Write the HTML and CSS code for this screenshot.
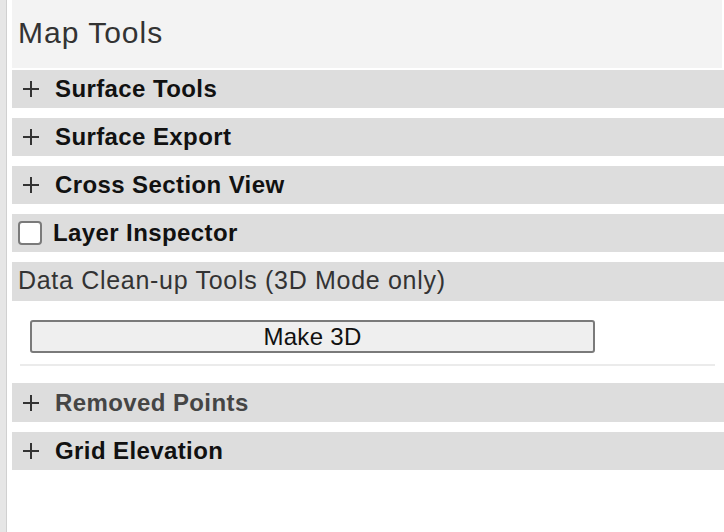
FILE: index.html
```html
<!DOCTYPE html>
<html>
<head>
    <title>Map Tools</title>
    <link rel="stylesheet" href="styles.css">
</head>
<body>
    <div class="splitter"></div>
    <div class="panel">
        <div class="panel-title">Map Tools</div>

        <div class="section">
            <svg class="plus" width="18" height="18" viewBox="0 0 18 18"><path d="M9 1v16M1 9h16" stroke="#333" stroke-width="2"/></svg>
            <span>Surface Tools</span>
        </div>
        <div class="section">
            <svg class="plus" width="18" height="18" viewBox="0 0 18 18"><path d="M9 1v16M1 9h16" stroke="#333" stroke-width="2"/></svg>
            <span>Surface Export</span>
        </div>
        <div class="section">
            <svg class="plus" width="18" height="18" viewBox="0 0 18 18"><path d="M9 1v16M1 9h16" stroke="#333" stroke-width="2"/></svg>
            <span>Cross Section View</span>
        </div>
        <label class="section">
            <input type="checkbox" class="check">
            <span>Layer Inspector</span>
        </label>

        <div class="group-title">Data Clean-up Tools (3D Mode only)</div>
        <div class="group-body">
            <button class="make-btn">Make 3D</button>
            <hr class="divider">
        </div>

        <div class="section muted">
            <svg class="plus" width="18" height="18" viewBox="0 0 18 18"><path d="M9 1v16M1 9h16" stroke="#333" stroke-width="2"/></svg>
            <span>Removed Points</span>
        </div>
        <div class="section">
            <svg class="plus" width="18" height="18" viewBox="0 0 18 18"><path d="M9 1v16M1 9h16" stroke="#333" stroke-width="2"/></svg>
            <span>Grid Elevation</span>
        </div>
    </div>
</body>
</html>
```

FILE: styles.css
```css
html, body {
    height: 100%;
}

body {
    margin: 0;
    display: flex;
    background-color: #fff;
    font-family: "Liberation Sans", Arial, sans-serif;
    color: #111;
}

.splitter {
    width: 6px;
    background-color: #e6e6e6;
    border-right: 1px solid #d0d0d0;
    flex-shrink: 0;
}

.panel {
    flex: 1;
    padding-left: 5px;
}

.panel-title {
    height: 66px;
    line-height: 66px;
    padding: 0 0 2px 6px;
    margin-right: 2px;
    margin-bottom: 2px;
    background-color: #f3f3f3;
    font-size: 30px;
    letter-spacing: 1px;
    color: #333;
}

.section {
    display: flex;
    align-items: center;
    height: 38px;
    margin-bottom: 10px;
    background-color: #dddddd;
    font-size: 24px;
    font-weight: bold;
    letter-spacing: 0.4px;
    color: #111;
}

.section .plus {
    margin: 0 15px 0 10px;
    flex-shrink: 0;
}

.section.muted {
    color: #454545;
    height: 39px;
}

.check {
    appearance: none;
    -webkit-appearance: none;
    width: 24px;
    height: 24px;
    margin: 0 11px 0 6px;
    border: 2px solid #7a7a7a;
    border-radius: 4px;
    background-color: #fff;
}

.group-title {
    height: 36px;
    line-height: 36px;
    padding: 0 0 3px 6px;
    background-color: #dddddd;
    font-size: 25px;
    letter-spacing: 0.7px;
    color: #333;
}

.group-body {
    padding: 19px 9px 17px 8px;
}

.make-btn {
    display: block;
    width: 565px;
    height: 33px;
    margin-left: 10px;
    padding: 0;
    border: 2px solid #7a7a7a;
    border-radius: 3px;
    background-color: #efefef;
    font-family: "Liberation Sans", Arial, sans-serif;
    font-size: 24px;
    letter-spacing: 0.3px;
    color: #111;
}

.divider {
    margin: 11px 0 0 0;
    border: none;
    border-top: 2px solid #ebebeb;
}
```
